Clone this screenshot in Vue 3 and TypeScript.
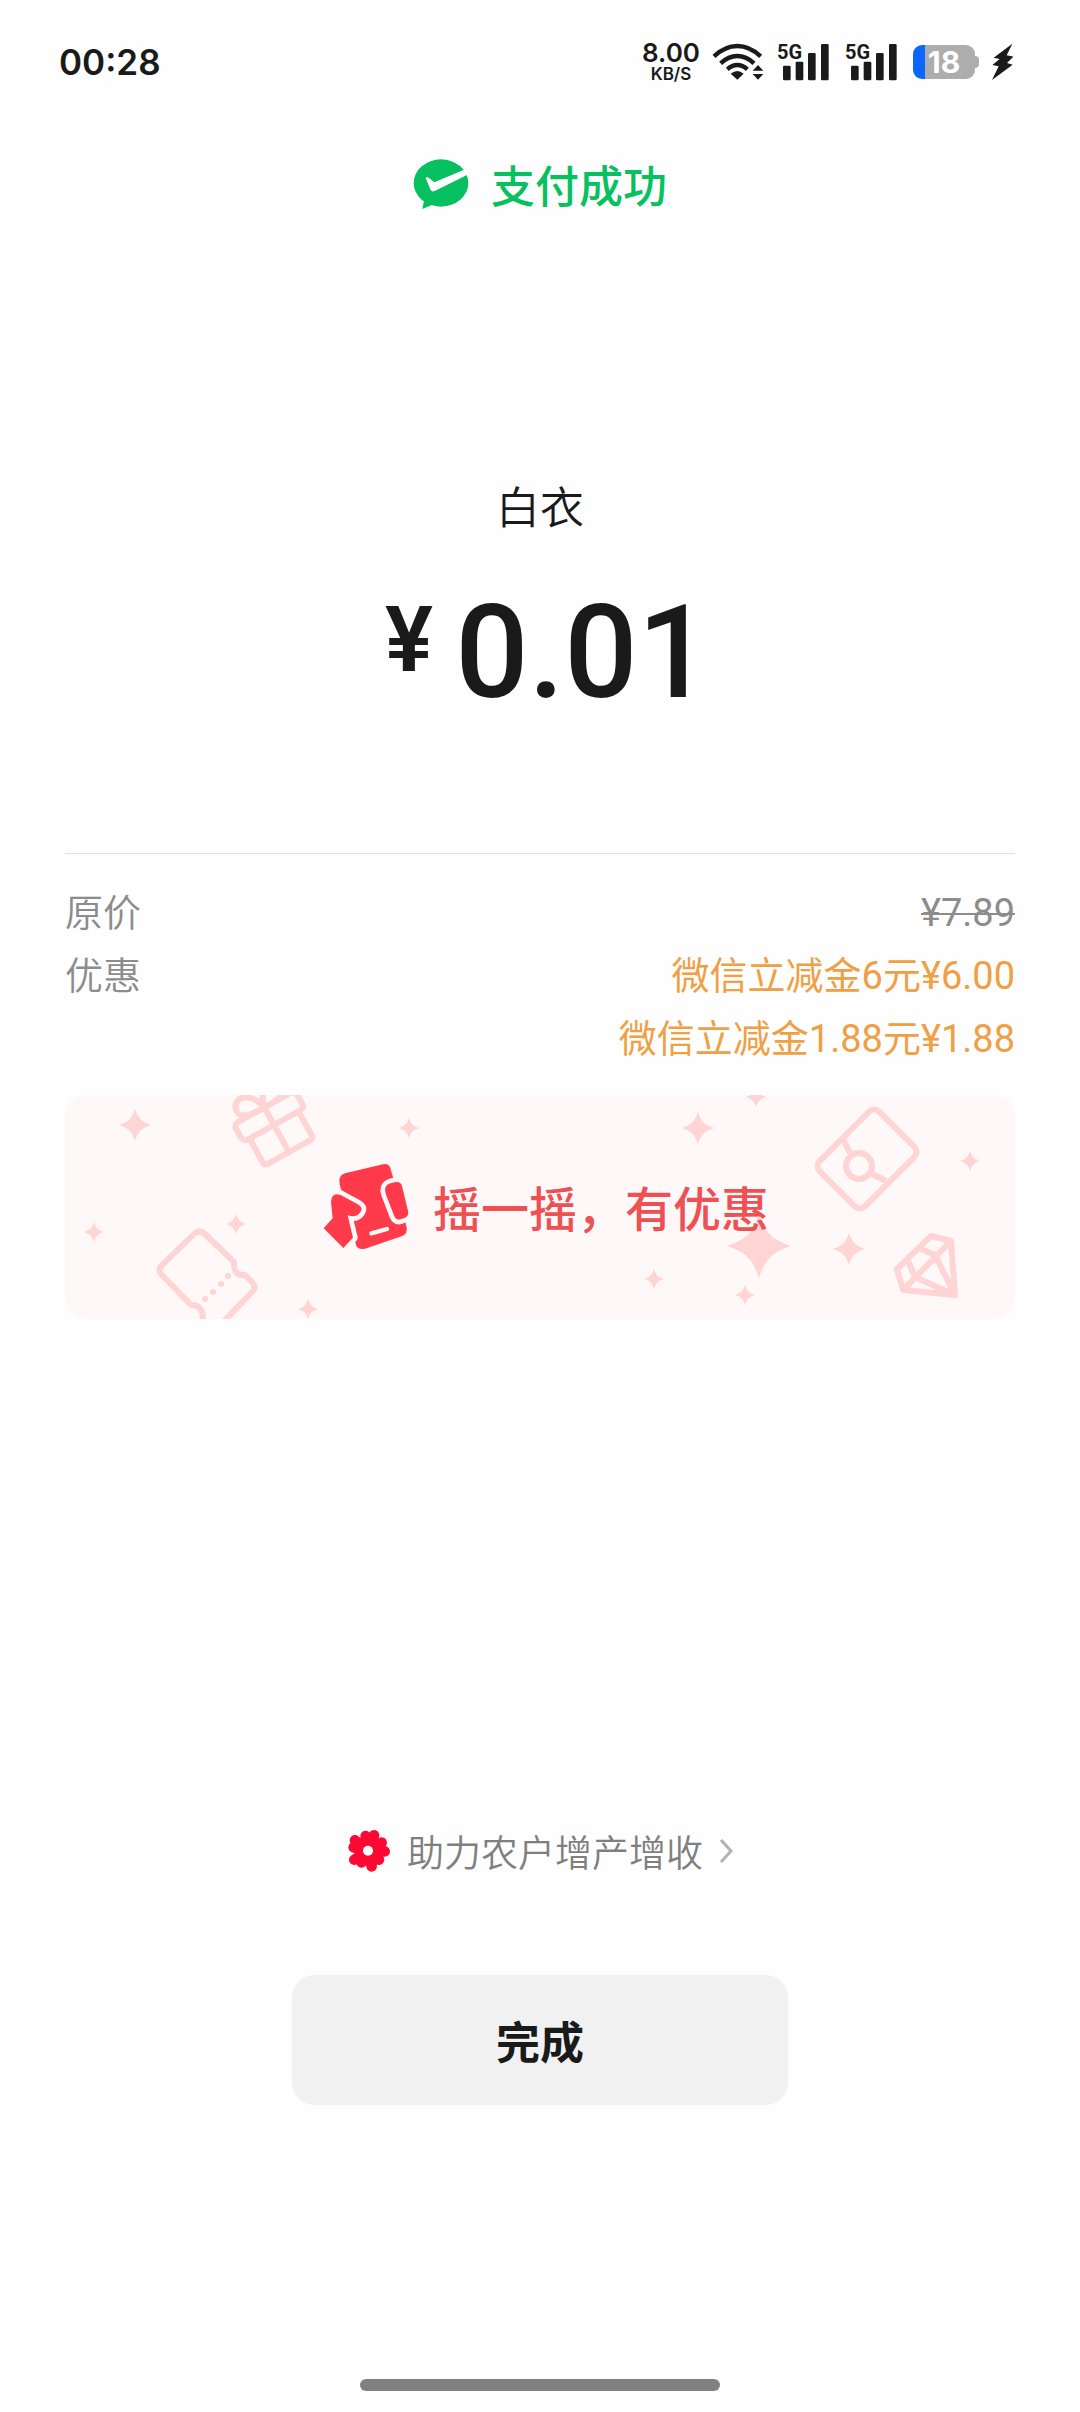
<script setup lang="ts">
interface Star {
  x: number
  y: number
  scale: number
}

interface Discount {
  name: string
  amount: string
}

const discounts: Discount[] = [
  { name: '微信立减金6元', amount: '¥6.00' },
  { name: '微信立减金1.88元', amount: '¥1.88' },
]

const stars: Star[] = [
  { x: 70, y: 30, scale: 16 },
  { x: 29, y: 137, scale: 10 },
  { x: 171, y: 129, scale: 10 },
  { x: 243, y: 214, scale: 10 },
  { x: 344, y: 33, scale: 10 },
  { x: 633, y: 33, scale: 16 },
  { x: 691, y: 2, scale: 10 },
  { x: 905, y: 66, scale: 10 },
  { x: 694, y: 151, scale: 32 },
  { x: 784, y: 154, scale: 16 },
  { x: 589, y: 184, scale: 10 },
  { x: 680, y: 200, scale: 10 },
]

const sims = [1, 2]
const petals = [
  'M110 77L118 122L135 75',
  'M158 97L118 122L167 123',
  'M150 148L118 122L128 168',
  'M98 156L118 122L76 148',
  'M74 111L118 122L78 90',
]
</script>

<template>
  <div class="page">
    <header class="status">
      <time class="clock">00:28</time>
      <div class="indicators">
        <div class="speed">
          <span class="speed-value">8.00</span>
          <span class="speed-unit">KB/S</span>
        </div>
        <svg class="wifi" viewBox="279 36 159 120" aria-hidden="true">
          <g fill="none" stroke="#1a1a1a" stroke-width="13">
            <path d="M285 79Q318 48 355 48Q392 48 425 79" />
            <path d="M305 100Q328 78 355 78Q382 78 405 100" />
            <path d="M325 118Q339 105 355 105Q371 105 385 118" />
          </g>
          <path d="M335 131Q355 115 374 131L355 149Z" fill="#1a1a1a" />
          <path d="M401 122L417 105L433 122ZM401 132L433 132L417 149Z" fill="#1a1a1a" />
        </svg>
        <div v-for="sim in sims" :key="sim" class="signal">
          <span class="network">5G</span>
          <svg viewBox="474 36 156 120" aria-hidden="true">
            <g fill="#1a1a1a">
              <rect x="492" y="107" width="23" height="44" rx="4" />
              <rect x="530" y="95" width="23" height="56" rx="4" />
              <rect x="567" y="69" width="23" height="82" rx="4" />
              <rect x="606" y="42" width="23" height="109" rx="4" />
            </g>
          </svg>
        </div>
        <div class="battery">
          <div class="cell"><span>18</span></div>
          <div class="cap"></div>
        </div>
        <svg class="bolt" viewBox="1107 42 66 114" aria-hidden="true">
          <path d="M1171 44L1115 86L1133 90L1111 108L1130 112L1110 153L1172 107L1155 102L1174 83L1154 79Z" fill="#1a1a1a" />
        </svg>
      </div>
    </header>

    <main class="content">
      <h1 class="result">
        <svg viewBox="42 52 168 153" aria-hidden="true">
          <ellipse cx="126" cy="124" rx="82" ry="71" fill="#07c160" />
          <path d="M76 172L70 202L104 188Z" fill="#07c160" />
          <path d="M80 109Q85 104 91 110L106 122L188 87Q199 82 212 86L212 96L107 148Q99 152 95 145Z" fill="#fefefe" />
        </svg>
        <span class="label">支付成功</span>
      </h1>

      <p class="payee">白衣</p>
      <p class="total"><span class="currency">¥</span><span class="figure">0.01</span></p>

      <dl class="details">
        <div class="row">
          <dt>原价</dt>
          <dd><s>¥7.89</s></dd>
        </div>
        <div class="row">
          <dt>优惠</dt>
          <dd class="discounts">
            <span v-for="item in discounts" :key="item.name">{{ item.name }}{{ item.amount }}</span>
          </dd>
        </div>
      </dl>

      <button type="button" class="banner">
        <svg class="pattern" viewBox="0 0 950 224" preserveAspectRatio="xMidYMid slice" aria-hidden="true">
          <path
            v-for="(star, index) in stars"
            :key="index"
            d="M0-1C.2-.4 .4-.2 1 0C.4 .2 .2 .4 0 1C-.2 .4-.4 .2-1 0C-.4-.2-.2-.4 0-1Z"
            :transform="`translate(${star.x} ${star.y}) scale(${star.scale})`"
            fill="#ffd4d4"
          />
          <g fill="none" stroke="#ffd4d4" stroke-width="6" stroke-linejoin="round">
            <g transform="translate(209 30) rotate(-29)">
              <rect x="-35" y="-20" width="70" height="20" rx="5" />
              <path d="M-28 0V27Q-28 31-24 31H24Q28 31 28 27V0M0-20V31" />
              <path d="M0-20C-12-20-26-20-26-30C-26-42-6-46 0-20C6-46 26-42 26-30C26-20 12-20 0-20" />
            </g>
            <path d="M159 226L187 197Q192 192 187 187L180 180Q168 181 169 167L140 139Q134 134 129 139L97 170Q92 175 97 180L126 210Q139 210 138 226" />
            <rect x="-32" y="-42" width="64" height="84" rx="7" transform="translate(802 64) rotate(45)" />
            <path d="M778 44L785 58M807 79L821 86" />
            <circle cx="794" cy="71" r="13" />
            <path d="M866 141L886 146L890 200L838 195L832 174Z" />
            <path d="M886 146L838 195M856 154L870 160L890 200L850 182L843 166" />
          </g>
          <g fill="#ffd4d4">
            <circle cx="163" cy="181" r="3" />
            <circle cx="156" cy="189" r="3" />
            <circle cx="148" cy="197" r="3" />
            <circle cx="140" cy="204" r="3" />
          </g>
        </svg>
        <svg class="shake" viewBox="36 63 270 270" aria-hidden="true">
          <path d="M108 97L222 70Q240 66 245 84L293 258Q296 278 280 285L168 323Q146 328 141 311L92 130Q86 104 108 97Z" fill="#ff3b4b" />
          <g fill="#ff3b4b" stroke="#fff8f8" stroke-width="28" stroke-linejoin="round" paint-order="stroke">
            <path d="M66 182Q68 152 95 162L145 189Q165 200 154 214Q142 232 116 223L132 290L103 321L44 262L71 232Z" />
            <path d="M228 148Q228 132 244 127L260 123Q275 121 279 135L297 210Q301 224 288 230L275 235Q262 239 256 226L231 161Z" />
          </g>
          <path d="M187 277L234 264" stroke="#fff8f8" stroke-width="13" stroke-linecap="round" />
        </svg>
        <span class="banner-text label">摇一摇，有优惠</span>
      </button>
    </main>

    <footer class="actions">
      <a href="#" class="charity">
        <svg class="flower" viewBox="54 56 132 132" aria-hidden="true">
          <circle cx="118" cy="122" r="38" fill="#fa0a32" />
          <path
            v-for="petal in petals"
            :key="petal"
            :d="petal"
            fill="#fa0a32"
            stroke="#fa0a32"
            stroke-width="32"
            stroke-linecap="round"
            stroke-linejoin="round"
          />
          <circle cx="117" cy="121" r="15" fill="#fefefe" />
        </svg>
        <span class="label">助力农户增产增收</span>
        <svg class="chevron" viewBox="0 0 14 26" aria-hidden="true">
          <path d="M2 2L12 13L2 24" fill="none" stroke="#b2b2b2" stroke-width="3" />
        </svg>
      </a>
      <button type="button" class="done"><span class="label">完成</span></button>
      <div class="home-bar"></div>
    </footer>
  </div>
</template>

<style>
body {
  margin: 0;
  background: #fefefe;
}
</style>

<style scoped>
.page {
  display: flex;
  flex-direction: column;
  min-height: 100vh;
  box-sizing: border-box;
  font-family: Roboto, "Noto Sans CJK SC", sans-serif;
  color: #1a1a1a;
}

.label {
  display: block;
  padding-top: 8px;
}

.status {
  display: flex;
  justify-content: space-between;
  align-items: center;
  height: 124px;
  padding: 0 67px 0 59px;
  font-family: Inter, sans-serif;
}

.clock {
  font-size: 35px;
  line-height: 40px;
  font-weight: 600;
}

.indicators {
  display: flex;
  align-items: center;
  gap: 16px;
}

.speed {
  display: flex;
  flex-direction: column;
  align-items: center;
  font-weight: 600;
}

.speed-value {
  font-size: 26px;
  line-height: 24px;
}

.speed-unit {
  font-size: 17px;
  line-height: 18px;
}

.wifi {
  width: 53px;
  height: 40px;
  margin-right: -4px;
  margin-left: -4px;
}

.signal {
  position: relative;
  width: 52px;
  height: 40px;
}

.signal svg {
  display: block;
  width: 52px;
  height: 40px;
}

.network {
  position: absolute;
  top: 0;
  left: 0;
  font-family: Roboto, sans-serif;
  font-size: 20px;
  line-height: 20px;
  font-weight: 700;
}

.battery {
  display: flex;
  align-items: center;
}

.cell {
  width: 62px;
  height: 34px;
  border-radius: 9px;
  background: linear-gradient(90deg, #0a66ff 12px, #adadad 12px);
  color: #ffffff;
  font-size: 30px;
  line-height: 34px;
  font-weight: 700;
  text-align: center;
}

.cap {
  width: 4px;
  height: 12px;
  border-radius: 0 4px 4px 0;
  background: #adadad;
}

.bolt {
  width: 22px;
  height: 38px;
  margin-left: -4px;
}

.content {
  display: flex;
  flex-direction: column;
  padding: 0 65px;
}

.result {
  display: flex;
  justify-content: center;
  align-items: center;
  gap: 22px;
  height: 64px;
  margin: 28px 0 0;
  color: #07c160;
  font-size: 44px;
  line-height: 64px;
  font-weight: 500;
}

.result svg {
  width: 56px;
  height: 51px;
}

.payee {
  margin: 261px 0 0;
  text-align: center;
  font-size: 44px;
  line-height: 64px;
  font-weight: 350;
}

.total {
  display: flex;
  justify-content: center;
  align-items: flex-start;
  gap: 22px;
  margin: 48px 0 0;
  padding-left: 16px;
  font-weight: 600;
}

.currency {
  font-size: 90px;
  line-height: 104px;
}

.figure {
  font-size: 129px;
  line-height: 128px;
  font-weight: 500;
}

.details {
  margin: 136px 0 0;
  padding: 28px 0 24px;
  border-top: 1px solid #e0e0e0;
  font-size: 38px;
  line-height: 63px;
}

.row {
  display: flex;
  justify-content: space-between;
  color: #8c8c8c;
  font-weight: 350;
}

.row dd {
  margin: 0;
  font-weight: 400;
}

.row s {
  text-decoration-thickness: 2px;
}

.row .discounts {
  display: flex;
  flex-direction: column;
  align-items: flex-end;
  color: #f0a044;
}

.banner {
  position: relative;
  display: flex;
  justify-content: center;
  align-items: center;
  gap: 22px;
  height: 224px;
  padding: 0 0 0 10px;
  border: 0;
  border-radius: 20px;
  background: #fff8f8;
  overflow: hidden;
  color: #ee5153;
  font-family: inherit;
  font-size: 48px;
  line-height: 64px;
  font-weight: 500;
}

.pattern {
  position: absolute;
  inset: 0;
  width: 100%;
  height: 100%;
}

.shake {
  position: relative;
  width: 90px;
  height: 90px;
}

.banner-text {
  position: relative;
}

.actions {
  display: flex;
  flex-direction: column;
  align-items: center;
  margin-top: auto;
  padding-bottom: 21px;
}

.charity {
  display: flex;
  align-items: center;
  gap: 16px;
  height: 54px;
  color: #7f7f7f;
  font-size: 37px;
  line-height: 54px;
  font-weight: 350;
  text-decoration: none;
}

.flower {
  width: 44px;
  height: 44px;
}

.chevron {
  width: 14px;
  height: 26px;
}

.done {
  width: 46%;
  height: 130px;
  margin-top: 97px;
  padding: 0;
  border: 0;
  border-radius: 22px;
  background: #f1f1f1;
  color: #1a1a1a;
  font-family: inherit;
  font-size: 44px;
  line-height: 64px;
  font-weight: 700;
}

.home-bar {
  width: 33.333%;
  height: 12px;
  margin-top: 274px;
  border-radius: 6px;
  background: #808080;
}
</style>
